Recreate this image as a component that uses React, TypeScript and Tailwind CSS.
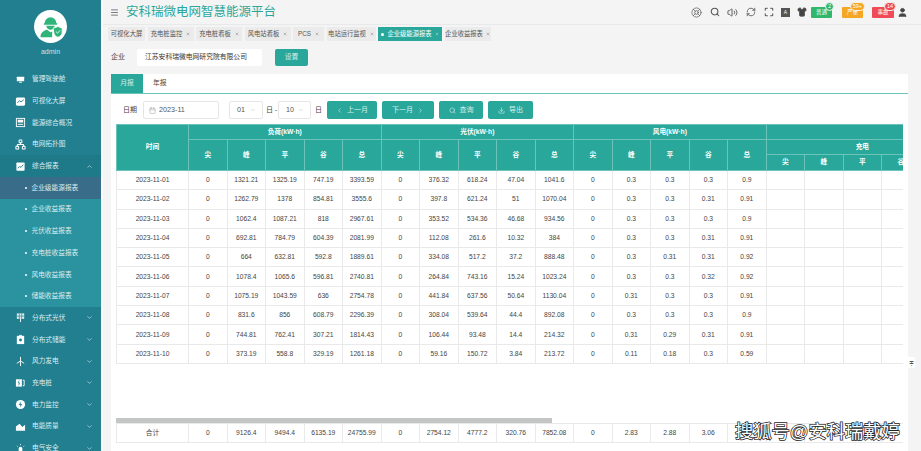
import { ChevronDown, ChevronLeft, ChevronRight, ChevronUp, Calendar, Download, LifeBuoy, Maximize, Menu, Network, RefreshCw, Search, Shirt, User, Volume2, X } from "lucide-react";
import type { ReactNode } from "react";

const font = "font-['Liberation_Sans','Noto_Sans_CJK_SC',sans-serif]";

const rows = [
  ["2023-11-01", "0", "1321.21", "1325.19", "747.19", "3393.59", "0", "376.32", "618.24", "47.04", "1041.6", "0", "0.3", "0.3", "0.3", "0.9"],
  ["2023-11-02", "0", "1262.79", "1378", "854.81", "3555.6", "0", "397.8", "621.24", "51", "1070.04", "0", "0.3", "0.3", "0.31", "0.91"],
  ["2023-11-03", "0", "1062.4", "1087.21", "818", "2967.61", "0", "353.52", "534.36", "46.68", "934.56", "0", "0.3", "0.3", "0.3", "0.9"],
  ["2023-11-04", "0", "692.81", "784.79", "604.39", "2081.99", "0", "112.08", "261.6", "10.32", "384", "0", "0.3", "0.3", "0.31", "0.91"],
  ["2023-11-05", "0", "664", "632.81", "592.8", "1889.61", "0", "334.08", "517.2", "37.2", "888.48", "0", "0.3", "0.31", "0.31", "0.92"],
  ["2023-11-06", "0", "1078.4", "1065.6", "596.81", "2740.81", "0", "264.84", "743.16", "15.24", "1023.24", "0", "0.3", "0.3", "0.32", "0.92"],
  ["2023-11-07", "0", "1075.19", "1043.59", "636", "2754.78", "0", "441.84", "637.56", "50.64", "1130.04", "0", "0.31", "0.3", "0.3", "0.91"],
  ["2023-11-08", "0", "831.6", "856", "608.79", "2296.39", "0", "308.04", "539.64", "44.4", "892.08", "0", "0.3", "0.3", "0.3", "0.9"],
  ["2023-11-09", "0", "744.81", "762.41", "307.21", "1814.43", "0", "106.44", "93.48", "14.4", "214.32", "0", "0.31", "0.29", "0.31", "0.91"],
  ["2023-11-10", "0", "373.19", "558.8", "329.19", "1261.18", "0", "59.16", "150.72", "3.84", "213.72", "0", "0.11", "0.18", "0.3", "0.59"],
];
const totals = ["合计", "0", "9126.4", "9494.4", "6135.19", "24755.99", "0", "2754.12", "4777.2", "320.76", "7852.08", "0", "2.83", "2.88", "3.06", ""];
const periods = ["尖", "峰", "平", "谷", "总"];

function Glyph({ children }: { children: ReactNode }) {
  return (
    <svg viewBox="0 0 12 12" className="h-[11px] w-[11px] shrink-0" fill="none">
      {children}
    </svg>
  );
}

const menuTop: [string, ReactNode][] = [
  ["管理驾驶舱", <Glyph><rect x="2" y="3" width="8" height="5" rx="0.5" fill="#fff" /><rect x="4.5" y="8.5" width="3" height="1" fill="#fff" /></Glyph>],
  ["可视化大屏", <Glyph><rect x="1" y="1.5" width="10" height="9" rx="1.5" fill="#fff" /><path d="M2.5 7.5 5 5l1.5 1.5L9.5 4" stroke="#217f90" /></Glyph>],
  ["能源综合概况", <Glyph><rect x="1.5" y="1.5" width="9" height="9" stroke="#fff" /><rect x="3" y="3" width="6" height="3" fill="#fff" /><path d="M3 8h6" stroke="#fff" /></Glyph>],
  ["电网拓扑图", <Network size={11} color="#fff" strokeWidth={2.2} className="shrink-0" />],
  ["综合报表", <Glyph><rect x="1.5" y="1.5" width="9" height="9" rx="1" fill="#fff" /><path d="M3 8l2-2 1.5 1L9 4" stroke="#217f90" /></Glyph>],
];
const menuBottom: [string, ReactNode][] = [
  ["分布式光伏", <Glyph><rect x="2" y="1.5" width="8" height="6" fill="#fff" opacity="0.85" /><path d="M4.7 1.5v6M7.3 1.5v6M2 4.5h8M6 7.5V11" stroke="#217f90" strokeWidth="0.7" /><path d="M6 7.5V11" stroke="#fff" /></Glyph>],
  ["分布式储能", <Glyph><rect x="2" y="2" width="8" height="9" fill="#fff" /><rect x="4.5" y="1" width="3" height="1" fill="#fff" /><circle cx="6" cy="6.5" r="1.6" fill="#217f90" /></Glyph>],
  ["风力发电", <Glyph><path d="M6 5.5V11M6 5.5 6 1M6 5.5 2 8M6 5.5 10 8" stroke="#fff" /></Glyph>],
  ["充电桩", <Glyph><rect x="1" y="2.5" width="6.5" height="8" fill="#fff" /><path d="M4.5 4 3.5 6.5h1.5L4 9" stroke="#217f90" strokeWidth="0.8" /><path d="M8.5 3.5h1.5v6H8.5" stroke="#fff" /></Glyph>],
  ["电力监控", <Glyph><circle cx="6" cy="6" r="5" fill="#fff" /><path d="M6.8 2.5 4 6.5h2l-.8 3 2.8-4H6z" fill="#217f90" /></Glyph>],
  ["电能质量", <Glyph><path d="M1 2v8.5h10V4L8 6.5 5 3 1 6" fill="#fff" /></Glyph>],
  ["电气安全", <Glyph><path d="M4 9V6a2 2 0 0 1 4 0v3z" fill="#fff" /><path d="M2.5 10h7M6 1v1.5M2 3l1 1M10 3 9 4" stroke="#fff" strokeWidth="0.8" /></Glyph>],
];
const subMenu = ["企业级能源报表", "企业收益报表", "光伏收益报表", "充电桩收益报表", "风电收益报表", "储能收益报表"];

const tags = [
  ["可视化大屏", "w-[37px]", false],
  ["充电桩监控", "w-[46px]", true],
  ["充电桩看板", "w-[46px]", true],
  ["风电站看板", "w-[46px]", true],
  ["PCS", "w-[31px]", true],
  ["电站运行监视", "w-[49px]", true],
] as const;

function Sidebar() {
  return (
    <aside className="flex w-[101px] shrink-0 flex-col bg-[#217f90] text-[#dcecee]">
      <div className="flex h-[68.500px] shrink-0 flex-col items-center pt-[10px]">
        <div className="flex h-[33px] w-[33px] items-center justify-center rounded-full bg-white">
          <svg viewBox="0 0 30 30" className="h-[25px] w-[25px]" fill="#2fb57a">
            <path d="M8 11a7 7 0 0 1 14 0h1v2H7v-2z" />
            <path d="M10 14h10a5 5 0 0 1-10 0z" />
            <path d="M3 28c0-6 4-8 8-9l4 3 2-1v7z" />
            <path d="M18 17l6-2 5 2v5c0 3-2 5-5 6-3-1-5-3-5-6z" stroke="#fff" />
            <path d="M21.500 21l2 2 3-3.500" stroke="#fff" fill="none" />
          </svg>
        </div>
        <div className="mt-[3px] text-[7px] leading-[12px] text-[#cfe4e7]">admin</div>
      </div>
      <nav className="flex flex-col">
        {menuTop.map(([name, icon]) => (
          <MenuRow key={name} name={name} icon={icon} open={name === "综合报表"} plain={name !== "综合报表"} />
        ))}
        <div className="flex flex-col bg-[#2a939f]">
          {subMenu.map((name, i) => (
            <div key={name} className={`flex h-[21.7px] items-center pl-[25px] text-[6.7px] ${i === 0 ? "bg-[#386c88]" : ""}`}>
              <span className="mr-[4.500px] h-[2px] w-[2px] rounded-full bg-white" />
              {name}
            </div>
          ))}
        </div>
        {menuBottom.map(([name, icon]) => (
          <MenuRow key={name} name={name} icon={icon} />
        ))}
      </nav>
    </aside>
  );
}

function MenuRow({ name, icon, open, plain }: { name: string; icon: ReactNode; open?: boolean; plain?: boolean }) {
  return (
    <div className={`flex h-[21.7px] shrink-0 items-center pl-[15px] pr-[8px] text-[6.7px] ${open ? "bg-[#1e7989]" : ""}`}>
      {icon}
      <span className="ml-[6px] flex-1 whitespace-nowrap">{name}</span>
      {plain ? null : open ? <ChevronUp size={7} /> : <ChevronDown size={7} />}
    </div>
  );
}

function Header() {
  return (
    <header className="flex h-[25px] shrink-0 items-center border-b border-[#e8e9ea] pl-[7px] pr-[13px]">
      <Menu size={9} color="#555" />
      <h1 className="ml-[7px] text-[12.500px] font-normal leading-none tracking-normal text-[#2aa79b]">安科瑞微电网智慧能源平台</h1>
      <div className="ml-auto flex items-center text-[#555]">
        <LifeBuoy size={11} className="mr-[8px]" strokeWidth={1.500} />
        <Search size={10} className="mr-[7px]" strokeWidth={2.500} />
        <Volume2 size={11} className="mr-[8px]" strokeWidth={2} />
        <RefreshCw size={10} className="mr-[8px]" strokeWidth={2} />
        <Maximize size={10} className="mr-[7px]" strokeWidth={2.500} />
        <span className="mr-[7px] flex h-[9px] w-[9px] items-center justify-center bg-[#555] text-[5px] leading-none text-white">A</span>
        <Shirt size={10} className="mr-[4px]" fill="#444" />
        <Alarm label="普通" count="2" color="bg-[#31b76c]" width="w-[21px]" gap="mr-[10px]" />
        <Alarm label="严重" count="59+" color="bg-[#f5a623]" width="w-[21px]" gap="mr-[9px]" />
        <Alarm label="事故" count="14" color="bg-[#ee4b57]" width="w-[22px]" gap="mr-[3px]" />
        <User size={11} fill="#444" color="#444" />
      </div>
    </header>
  );
}

function Alarm({ label, count, color, width, gap }: { label: string; count: string; color: string; width: string; gap: string }) {
  return (
    <div className={`relative flex h-[11px] items-center justify-center rounded-[1px] text-[5.500px] text-white ${color} ${width} ${gap}`}>
      {label}
      <span className={`absolute -right-[2px] -top-[5px] rounded-full border border-[#f4f4f4] px-[2px] text-[5.500px] leading-[7px] text-white ${color}`}>{count}</span>
    </div>
  );
}

function TagBar() {
  return (
    <div className="flex h-[19px] shrink-0 items-start gap-[2.500px] pl-[5px] pt-[2px] text-[6.300px] text-[#555]">
      {tags.map(([name, width, closable]) => (
        <div key={name} className={`flex h-[14px] items-center justify-center gap-[4px] whitespace-nowrap bg-[#ebebeb] ${width}`}>
          {name}
          {closable ? <X size={4} /> : null}
        </div>
      ))}
      <div className="flex h-[14px] w-[64px] items-center justify-center gap-[3px] whitespace-nowrap bg-[#2aa79b] text-white">
        <span className="h-[3px] w-[3px] rounded-full bg-white" />
        企业级能源报表
        <X size={4} />
      </div>
      <div className="flex h-[14px] w-[46px] items-center justify-center gap-[3px] whitespace-nowrap bg-[#ebebeb]">
        企业收益报表
        <X size={4} />
      </div>
    </div>
  );
}

function Toolbar() {
  const btn = "flex h-[18px] items-center justify-center rounded-[2px] bg-[#2aa79b] text-[7px] text-[#d6f0ed]";
  const sel = "flex h-[18px] items-center justify-between rounded-[2px] border border-[#e6e6e6] text-[7.200px] text-[#555]";
  return (
    <div className="flex h-[30px] shrink-0 items-center pl-[12px] pt-[2px] text-[7px] text-[#444]">
      <span className="w-[14px] whitespace-nowrap">日期</span>
      <div className="ml-[6px] flex h-[18px] w-[76px] items-center gap-[3px] rounded-[2px] border border-[#e6e6e6] pl-[5px] text-[7.200px] text-[#555]">
        <Calendar size={7} color="#aaa" />
        2023-11
      </div>
      <div className={`ml-[10px] w-[34px] pl-[7px] pr-[6px] ${sel}`}>
        01
        <ChevronDown size={6} color="#bbb" />
      </div>
      <span className="ml-[3px] w-[12px] whitespace-nowrap">日 -</span>
      <div className={`w-[33px] pl-[7px] pr-[6px] ${sel}`}>
        10
        <ChevronDown size={6} color="#bbb" />
      </div>
      <span className="ml-[4px]">日</span>
      <button className={`ml-[5px] w-[50px] gap-[4px] ${btn}`}>
        <ChevronLeft size={7} />
        上一月
      </button>
      <button className={`ml-[5px] w-[52px] gap-[4px] ${btn}`}>
        下一月
        <ChevronRight size={7} />
      </button>
      <button className={`ml-[5px] w-[44px] gap-[4px] ${btn}`}>
        <Search size={7} />
        查询
      </button>
      <button className={`ml-[5px] w-[45px] gap-[4px] ${btn}`}>
        <Download size={7} />
        导出
      </button>
    </div>
  );
}

function Cols() {
  return (
    <colgroup>
      <col className="w-[72px]" />
      {Array.from({ length: 20 }, (_, i) => (
        <col key={i} className="w-[38.500px]" />
      ))}
    </colgroup>
  );
}

function DataTable() {
  const th = "border border-[#6cc3ba] font-bold text-white";
  const td = "border border-[#e9e9e9] p-0 text-center";
  const table = "w-[842px] shrink-0 table-fixed border-collapse text-[6.700px] text-[#444]";
  return (
    <div className="relative flex h-[319px] w-[787px] shrink-0 flex-col items-start overflow-hidden">
      <table className={table}>
        <Cols />
        <thead className="bg-[#2aa79b] text-center">
          <tr className="h-[15px]">
            <th rowSpan={3} className={th}>时间</th>
            <th colSpan={5} className={th}>负荷(kW·h)</th>
            <th colSpan={5} className={th}>光伏(kW·h)</th>
            <th colSpan={5} className={th}>风电(kW·h)</th>
            <th colSpan={5} className={th} />
          </tr>
          <tr className="h-[15px]">
            {[0, 1, 2].map((g) => periods.map((p) => <th key={`${g}${p}`} rowSpan={2} className={th}>{p}</th>))}
            <th colSpan={5} className={th}>充电</th>
          </tr>
          <tr className="h-[16px]">
            {periods.map((p) => <th key={p} className={th}>{p === "总" ? "" : p}</th>)}
          </tr>
        </thead>
        <tbody>
          {rows.map((row) => (
            <tr key={row[0]} className="h-[19.300px]">
              {row.map((v, i) => <td key={i} className={td}>{v}</td>)}
              {periods.map((p) => <td key={p} className={td} />)}
            </tr>
          ))}
        </tbody>
      </table>
      <div className="flex-1" />
      <div className="h-[5px] w-[436px] shrink-0 bg-[#c4c6c6]" />
      <table className={table}>
        <Cols />
        <tbody>
          <tr className="h-[19px]">
            {totals.map((v, i) => <td key={i} className={td}>{v}</td>)}
            {periods.map((p) => <td key={p} className={td} />)}
          </tr>
        </tbody>
      </table>
    </div>
  );
}

export default function App() {
  return (
    <div className={`relative flex h-[451px] w-[921px] overflow-hidden bg-[#f4f4f4] ${font}`}>
      <Sidebar />
      <main className="flex min-w-0 flex-1 flex-col border-l-2 border-[#fbfbfb]">
        <Header />
        <TagBar />
        <div className="flex h-[30px] shrink-0 items-start pl-[8px] pt-[5px] text-[7px] text-[#444]">
          <span className="flex h-[17px] w-[26px] items-center">企业</span>
          <div className="flex h-[17px] w-[125px] items-center rounded-[2px] bg-white pl-[8px] text-[6.800px] text-[#333]">江苏安科瑞微电网研究院有限公司</div>
          <button className="ml-[13px] h-[17px] w-[33px] rounded-[2px] bg-[#2aa79b] text-[6.800px] text-[#d6f0ed]">设置</button>
        </div>
        <section className="ml-[8px] flex min-h-0 w-[797px] flex-1 flex-col bg-white">
          <div className="flex h-[20px] shrink-0 border-b border-[#6cc3ba] text-[6.800px] text-[#444]">
            <div className="flex w-[32px] items-center justify-center bg-[#2aa79b] text-[#d6f0ed]">月报</div>
            <div className="ml-[10px] flex items-center">年报</div>
          </div>
          <Toolbar />
          <div className="pl-[5px]">
            <DataTable />
          </div>
        </section>
      </main>
      <div className="absolute left-[907px] top-[357px] flex h-[11px] w-[8px] items-center justify-center rounded-[1px] bg-white text-[6px] leading-none text-[#555]">≑</div>
      <div className="absolute left-[735px] top-[421px] whitespace-nowrap text-[18.300px] leading-[22px] text-white [-webkit-text-stroke:1.500px_#222] [paint-order:stroke_fill]">搜狐号@安科瑞戴婷</div>
    </div>
  );
}
